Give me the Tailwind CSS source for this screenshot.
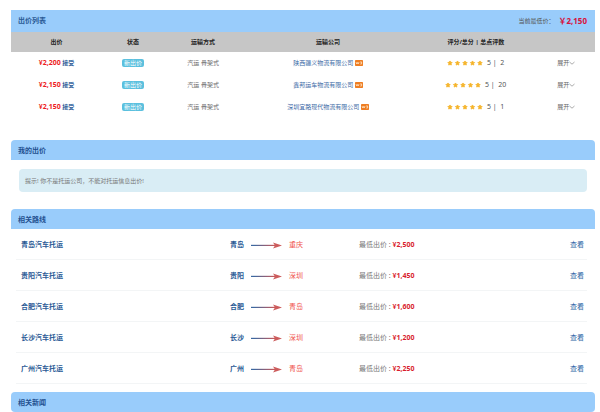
<!DOCTYPE html>
<html lang="zh-CN">
<head>
<meta charset="utf-8">
<meta name="viewport" content="width=device-width, initial-scale=1">
<title>出价列表</title>
<script src="https://cdn.jsdelivr.net/npm/@tailwindcss/browser@4"></script>
</head>
<body class="bg-white pt-[10px] pr-[5px] pl-[11px] font-['Noto_Sans','Noto_Sans_CJK_SC',sans-serif] text-[6px] leading-[10px] text-[#666]">
<svg class="absolute size-0" aria-hidden="true">
  <defs>
    <linearGradient id="fade" x1="0" x2="31" y1="0" y2="0" gradientUnits="userSpaceOnUse">
      <stop offset="0.1" stop-color="#3d68a0"/><stop offset="0.75" stop-color="#c85a5a"/>
    </linearGradient>
    <symbol id="arrow" viewBox="0 0 31 8"><path d="M0 3.8H25V5H0Z" fill="url(#fade)"/><path d="M22 1.4L31 4.4L22 7.4L24 4.4Z" fill="#cc5c5c"/></symbol>
    <symbol id="star" viewBox="0 0 10 10"><path d="M5 1.6L6.2 3.8L8.6 4.2L6.9 6L7.2 8.4L5 7.4L2.8 8.4L3.1 6L1.4 4.2L3.8 3.8Z" fill="#f6b52c" stroke="#f6b52c" stroke-width="1.4" stroke-linejoin="round"/></symbol>
    <symbol id="stars" viewBox="0 0 36 6"><use href="#star" width="6" height="6"/><use href="#star" x="7.5" width="6" height="6"/><use href="#star" x="15" width="6" height="6"/><use href="#star" x="22.5" width="6" height="6"/><use href="#star" x="30" width="6" height="6"/></symbol>
    <symbol id="down" viewBox="0 0 6 6"><path d="M.5 2L3 4.2L5.5 2" fill="none" stroke="#888" stroke-width=".7"/></symbol>
    <symbol id="medal" viewBox="0 0 8 6"><rect width="8" height="6" rx=".7" fill="#ee7d22"/><path d="M1 2L1.8 4L2.5 2.5L3.2 4L4 2M5 2H6.8M5.2 4H6.6V2" fill="none" stroke="#fff0d8" stroke-width=".7"/></symbol>
  </defs>
</svg>
<main>
  <section class="mb-[22px]">
    <header class="flex h-[22px] items-center justify-between bg-[#99ccfb] pr-2 pl-[7px]">
      <h2 class="text-[7px] font-bold text-[#2a5a95]">出价列表</h2>
      <p class="flex items-center gap-1 text-[#555]">当前最低价： <strong class="text-[8px] font-bold text-[#d8123c]">￥2,150</strong></p>
    </header>
    <table class="w-full table-fixed text-center">
      <colgroup><col class="w-[15.6%]"><col class="w-[10.6%]"><col class="w-[13.4%]"><col class="w-[29.4%]"><col class="w-[21.2%]"><col class="w-[9.8%]"></colgroup>
      <thead class="bg-[#c6c6c6] text-[#222]">
        <tr class="h-5"><th>出价</th><th>状态</th><th>运输方式</th><th>运输公司</th><th>评分/总分 | 总点评数</th><th></th></tr>
      </thead>
      <tbody>
        <tr class="h-[22px]">
          <td class="font-bold text-[#ed1c24]"><span class="text-[7px]">¥2,200</span> <a href="#" class="text-[#2c5c98]">接受</a></td>
          <td><span class="inline-block h-2 rounded-[2px] bg-[#5bc0de] px-[2px] leading-2 text-white">新出价</span></td>
          <td>汽运 骨架式</td>
          <td><a href="#" class="text-[#3a68a5]">陕西疆义物流有限公司 <svg class="inline h-[6px] w-2"><use href="#medal"/></svg></a></td>
          <td><svg class="mr-[2px] inline h-[6px] w-9"><use href="#stars"/></svg> <span class="text-[7px] text-[#555]">5 |&nbsp; 2</span></td>
          <td><button class="inline-flex items-center">展开<svg class="size-[6px]"><use href="#down"/></svg></button></td>
        </tr>
        <tr class="h-[22px]">
          <td class="font-bold text-[#ed1c24]"><span class="text-[7px]">¥2,150</span> <a href="#" class="text-[#2c5c98]">接受</a></td>
          <td><span class="inline-block h-2 rounded-[2px] bg-[#5bc0de] px-[2px] leading-2 text-white">新出价</span></td>
          <td>汽运 骨架式</td>
          <td><a href="#" class="text-[#3a68a5]">鑫邦运车物流有限公司 <svg class="inline h-[6px] w-2"><use href="#medal"/></svg></a></td>
          <td><svg class="mr-[2px] inline h-[6px] w-9"><use href="#stars"/></svg> <span class="text-[7px] text-[#555]">5 |&nbsp; 20</span></td>
          <td><button class="inline-flex items-center">展开<svg class="size-[6px]"><use href="#down"/></svg></button></td>
        </tr>
        <tr class="h-[22px]">
          <td class="font-bold text-[#ed1c24]"><span class="text-[7px]">¥2,150</span> <a href="#" class="text-[#2c5c98]">接受</a></td>
          <td><span class="inline-block h-2 rounded-[2px] bg-[#5bc0de] px-[2px] leading-2 text-white">新出价</span></td>
          <td>汽运 骨架式</td>
          <td><a href="#" class="text-[#3a68a5]">深圳宜路现代物流有限公司 <svg class="inline h-[6px] w-2"><use href="#medal"/></svg></a></td>
          <td><svg class="mr-[2px] inline h-[6px] w-9"><use href="#stars"/></svg> <span class="text-[7px] text-[#555]">5 |&nbsp; 1</span></td>
          <td><button class="inline-flex items-center">展开<svg class="size-[6px]"><use href="#down"/></svg></button></td>
        </tr>
      </tbody>
    </table>
  </section>

  <section class="mb-[17px]">
    <h2 class="flex h-5 items-center rounded-t-[4px] bg-[#99ccfb] px-[7px] pt-px text-[7px] font-bold text-[#1f5090]">我的出价</h2>
    <p class="mx-2 mt-[9px] flex h-[23px] items-center rounded-[4px] bg-[#d9edf5] px-[6px] text-[#777]">提示! 你不是托运公司，不能对托运信息出价!</p>
  </section>

  <section class="mb-2">
    <h2 class="flex h-5 items-center rounded-t-[4px] bg-[#99ccfb] px-[7px] pt-px text-[7px] font-bold text-[#1f5090]">相关路线</h2>
    <ul class="mr-2 ml-[5px] text-[7px] text-[#777]">
      <li class="grid h-[31px] grid-cols-[209fr_129fr_170fr_55fr] items-center border-b border-[#f3f5f6] pt-[2px] pr-[3px] pl-[5px]">
        <a href="#" class="font-bold text-[#2a5a95]">青岛汽车托运</a>
        <span class="flex items-center gap-[7px]"><b class="text-[#2a5a95]">青岛</b><svg class="h-2 w-[31px]"><use href="#arrow"/></svg><span class="text-[#f0554e]">重庆</span></span>
        <span>最低出价 : <b class="text-[#d91e2e]">¥2,500</b></span>
        <a href="#" class="text-right text-[#2c64a5]">查看</a>
      </li>
      <li class="grid h-[31px] grid-cols-[209fr_129fr_170fr_55fr] items-center border-b border-[#f3f5f6] pt-[2px] pr-[3px] pl-[5px]">
        <a href="#" class="font-bold text-[#2a5a95]">贵阳汽车托运</a>
        <span class="flex items-center gap-[7px]"><b class="text-[#2a5a95]">贵阳</b><svg class="h-2 w-[31px]"><use href="#arrow"/></svg><span class="text-[#f0554e]">深圳</span></span>
        <span>最低出价 : <b class="text-[#d91e2e]">¥1,450</b></span>
        <a href="#" class="text-right text-[#2c64a5]">查看</a>
      </li>
      <li class="grid h-[31px] grid-cols-[209fr_129fr_170fr_55fr] items-center border-b border-[#f3f5f6] pt-[2px] pr-[3px] pl-[5px]">
        <a href="#" class="font-bold text-[#2a5a95]">合肥汽车托运</a>
        <span class="flex items-center gap-[7px]"><b class="text-[#2a5a95]">合肥</b><svg class="h-2 w-[31px]"><use href="#arrow"/></svg><span class="text-[#f0554e]">青岛</span></span>
        <span>最低出价 : <b class="text-[#d91e2e]">¥1,600</b></span>
        <a href="#" class="text-right text-[#2c64a5]">查看</a>
      </li>
      <li class="grid h-[31px] grid-cols-[209fr_129fr_170fr_55fr] items-center border-b border-[#f3f5f6] pt-[2px] pr-[3px] pl-[5px]">
        <a href="#" class="font-bold text-[#2a5a95]">长沙汽车托运</a>
        <span class="flex items-center gap-[7px]"><b class="text-[#2a5a95]">长沙</b><svg class="h-2 w-[31px]"><use href="#arrow"/></svg><span class="text-[#f0554e]">深圳</span></span>
        <span>最低出价 : <b class="text-[#d91e2e]">¥1,200</b></span>
        <a href="#" class="text-right text-[#2c64a5]">查看</a>
      </li>
      <li class="grid h-[31px] grid-cols-[209fr_129fr_170fr_55fr] items-center border-b border-[#f3f5f6] pt-[2px] pr-[3px] pl-[5px]">
        <a href="#" class="font-bold text-[#2a5a95]">广州汽车托运</a>
        <span class="flex items-center gap-[7px]"><b class="text-[#2a5a95]">广州</b><svg class="h-2 w-[31px]"><use href="#arrow"/></svg><span class="text-[#f0554e]">青岛</span></span>
        <span>最低出价 : <b class="text-[#d91e2e]">¥2,250</b></span>
        <a href="#" class="text-right text-[#2c64a5]">查看</a>
      </li>
    </ul>
  </section>

  <section>
    <h2 class="flex h-5 items-center rounded-[4px] bg-[#99ccfb] px-[7px] pt-px text-[7px] font-bold text-[#1f5090]">相关新闻</h2>
  </section>
</main>
</body>
</html>
